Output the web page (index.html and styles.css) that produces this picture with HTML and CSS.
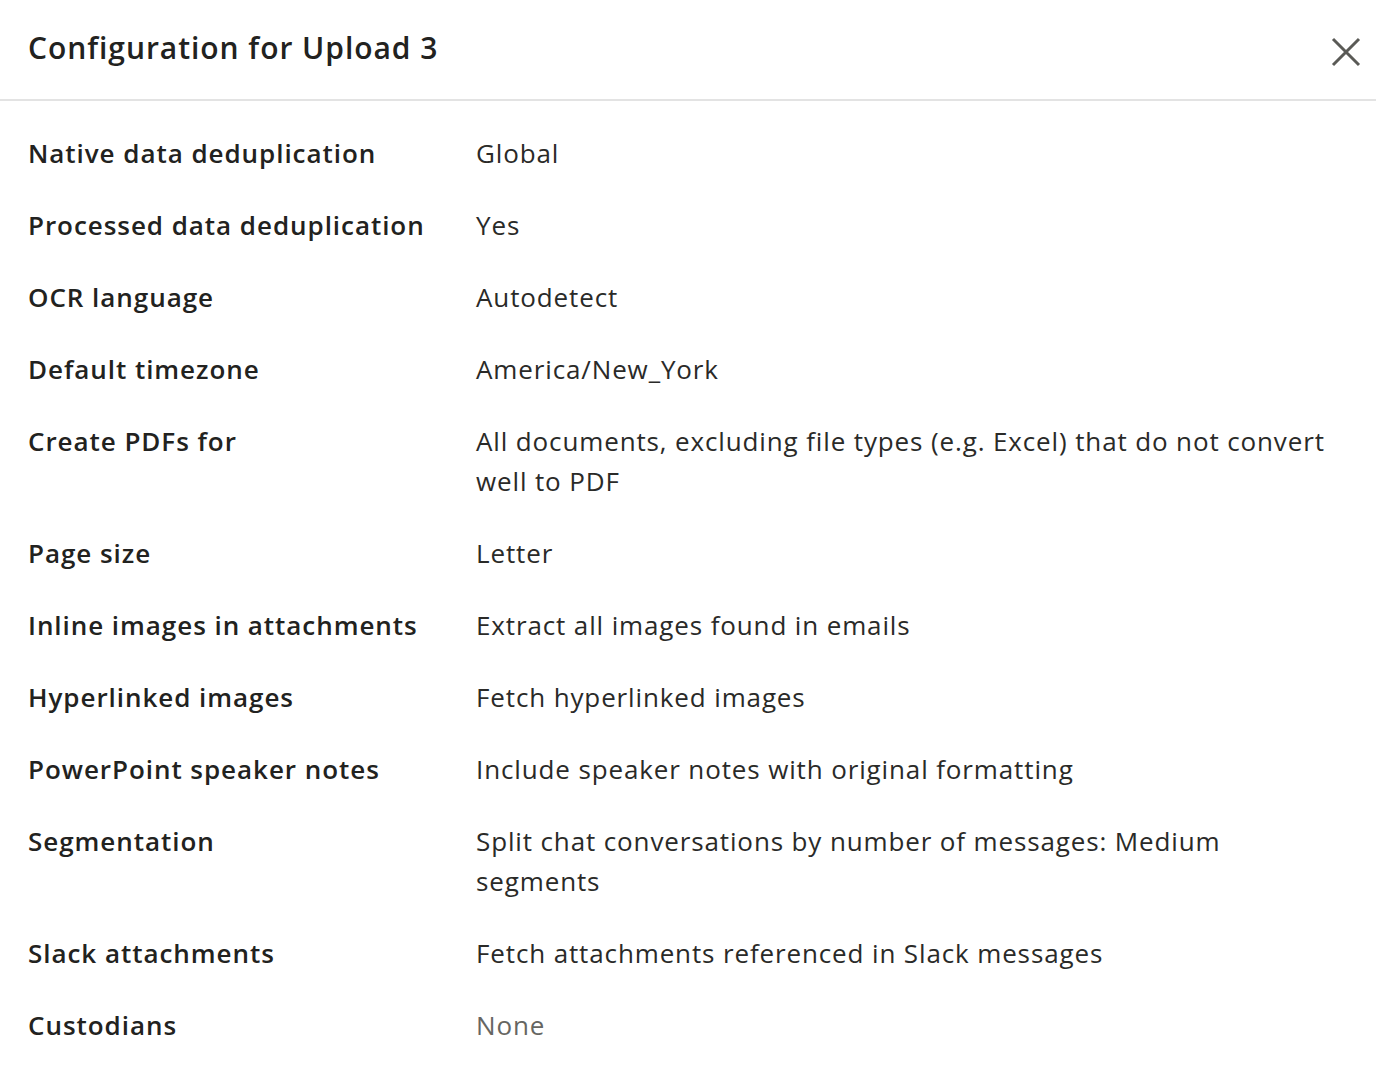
FILE: index.html
```html
<!DOCTYPE html>
<html lang="en">
<head>
    <meta charset="UTF-8">
    <meta name="viewport" content="width=device-width, initial-scale=1.0">
    <title>Configuration for Upload 3</title>
    <link rel="stylesheet" href="styles.css">
</head>
<body>
    <div class="modal">
        <div class="modal-header">
            <h1>Configuration for Upload 3</h1>
            <button class="close" aria-label="Close">
                <svg width="32" height="32" viewBox="0 0 32 32">
                    <path d="M3 3 L29 29 M29 3 L3 29" stroke="#5a5a56" stroke-width="3" fill="none"/>
                </svg>
            </button>
        </div>
        <div class="modal-body">
            <div class="row"><div class="label">Native data deduplication</div><div class="value">Global</div></div>
            <div class="row"><div class="label">Processed data deduplication</div><div class="value">Yes</div></div>
            <div class="row"><div class="label">OCR language</div><div class="value">Autodetect</div></div>
            <div class="row"><div class="label">Default timezone</div><div class="value">America/New_York</div></div>
            <div class="row"><div class="label">Create PDFs for</div><div class="value">All documents, excluding file types (e.g. Excel) that do not convert well to PDF</div></div>
            <div class="row"><div class="label">Page size</div><div class="value">Letter</div></div>
            <div class="row"><div class="label">Inline images in attachments</div><div class="value">Extract all images found in emails</div></div>
            <div class="row"><div class="label">Hyperlinked images</div><div class="value">Fetch hyperlinked images</div></div>
            <div class="row"><div class="label">PowerPoint speaker notes</div><div class="value">Include speaker notes with original formatting</div></div>
            <div class="row"><div class="label">Segmentation</div><div class="value">Split chat conversations by number of messages: Medium segments</div></div>
            <div class="row"><div class="label">Slack attachments</div><div class="value">Fetch attachments referenced in Slack messages</div></div>
            <div class="row"><div class="label">Custodians</div><div class="value muted">None</div></div>
        </div>
    </div>
</body>
</html>
```

FILE: styles.css
```css
body {
    margin: 0;
    font-family: "Open Sans", "Liberation Sans", sans-serif;
    background-color: #fff;
    color: #222220;
}
.modal {
    width: 100%;
}
.modal-header {
    display: flex;
    align-items: center;
    justify-content: space-between;
    height: 101px;
    padding: 0 14px 0 28px;
    border-bottom: 2px solid #e3e3e3;
    box-sizing: border-box;
}
.modal-header h1 {
    margin: 0;
    font-size: 30px;
    font-weight: 600;
    letter-spacing: 0.95px;
    color: #222220;
    position: relative;
    top: -2px;
}
.close {
    background: none;
    border: none;
    padding: 0;
    width: 32px;
    height: 32px;
    cursor: pointer;
    position: relative;
    top: 2px;
}
.modal-body {
    padding: 32px 28px 0 28px;
}
.row {
    display: flex;
    font-size: 26px;
    line-height: 40px;
    margin-bottom: 32px;
}
.label {
    width: 448px;
    flex-shrink: 0;
    font-weight: 600;
    letter-spacing: 0.95px;
}
.value {
    flex: 1;
    color: #2a2a28;
    letter-spacing: 0.87px;
}
.muted {
    color: #666662;
}
```
